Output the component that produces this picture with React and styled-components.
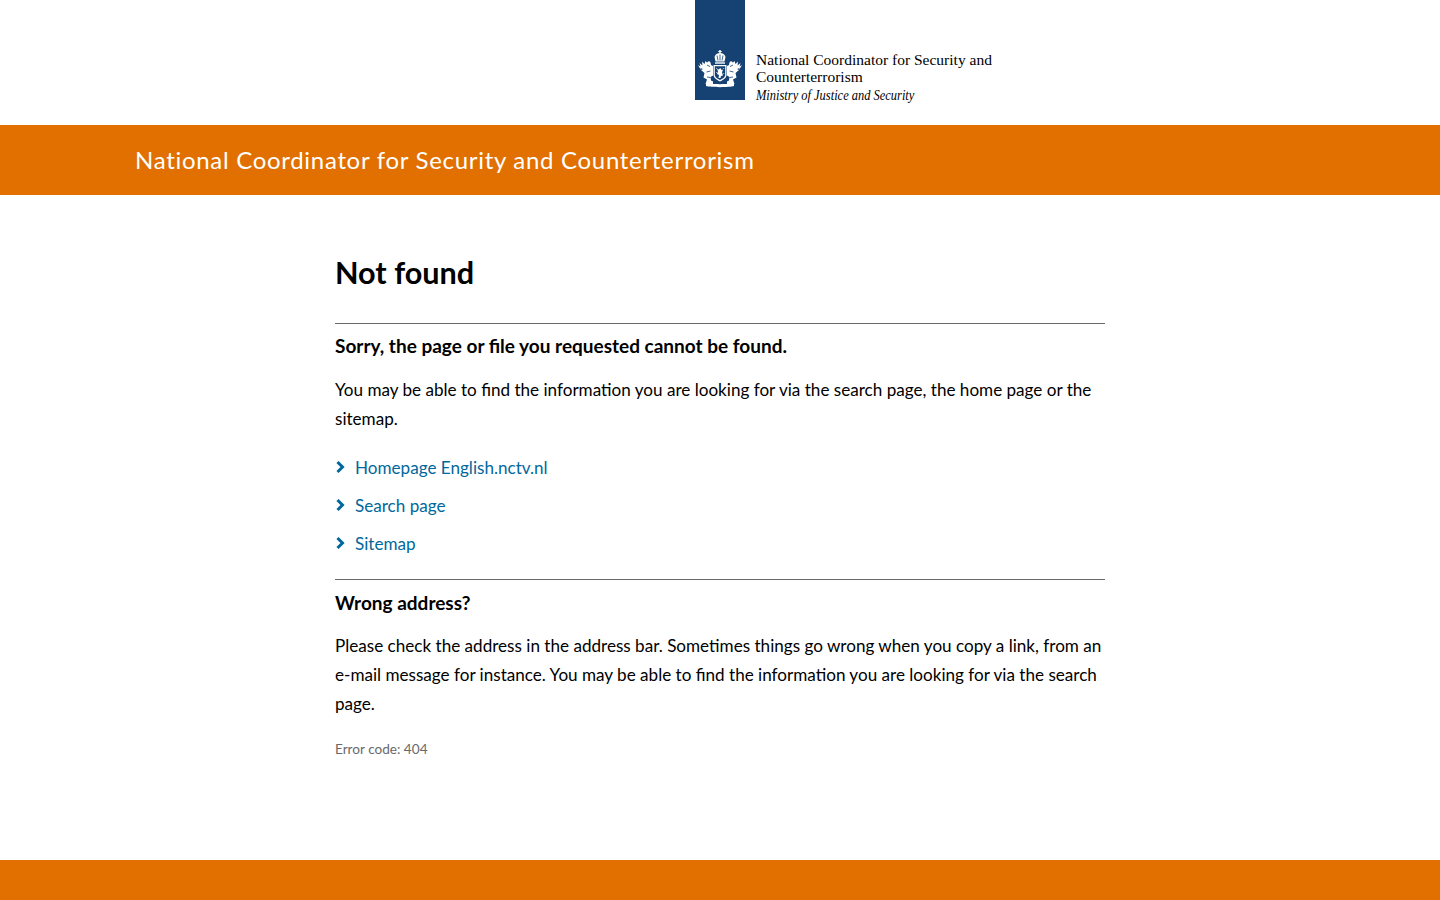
import React from 'react';
import styled, { createGlobalStyle } from 'styled-components';

const GlobalStyle = createGlobalStyle`
html, body {
  margin: 0;
  padding: 0;
  background: #fff;
  color: #000;
  font-family: Lato, "Open Sans", sans-serif;
}
`;

const Page = styled.div`
height: 900px;
display: flex;
flex-direction: column;
overflow: hidden;
`;

const Header = styled.header`
height: 125px;
display: flex;
padding-left: 695px;
`;

const Ribbon = styled.div`
width: 50px;
height: 100px;
background: #154273;
display: flex;
align-items: flex-end;
justify-content: center;
padding-bottom: 12px;
box-sizing: border-box;
`;

const Wordmark = styled.div`
padding: 51px 0 0 11px;
font-family: "Liberation Serif", serif;
font-size: 15.5px;
line-height: 17px;
color: #000;
`;

const Ministry = styled.div`
font-style: italic;
font-size: 15px;
line-height: 21px;
transform: scaleX(0.83);
transform-origin: left center;
white-space: nowrap;
`;

const Band = styled.div`
height: 68px;
padding: 0 0 2px 135px;
background: #e17000;
display: flex;
align-items: center;
color: #fff;
font-size: 24px;
font-weight: 400;
letter-spacing: 0.7px;
`;

const Main = styled.main`
flex: 1;
width: 770px;
margin-left: 335px;
`;

const Title = styled.h1`
margin: 57px 0 29px;
font-size: 30.6px;
line-height: 42px;
font-weight: 700;
`;

const Section = styled.section`
border-top: 1px solid #696969;
padding-top: ${p => p.$top}px;
`;

const Lead = styled.h2`
margin: 0 0 ${p => p.$gap}px;
font-size: 19px;
line-height: 29px;
font-weight: 700;
`;

const Text = styled.p`
margin: 0;
font-size: 17.1px;
line-height: 29px;
`;

const Links = styled.ul`
list-style: none;
margin: 15px 0 17px;
padding: 0;
`;

const LinkItem = styled.li`
height: 38px;
display: flex;
align-items: center;
gap: 10px;
`;

const Chevron = styled.svg`
width: 10px;
height: 14px;
flex: none;
margin-top: -1px;
`;

const Anchor = styled.a`
color: #01689b;
font-size: 17.1px;
text-decoration: none;
`;

const Code = styled.p`
margin: 21px 0 0;
font-size: 13.6px;
line-height: 20px;
color: #696969;
`;

const Footer = styled.footer`
height: 40px;
background: #e17000;
`;

const lion = 'M0 15l2.500 1.500L1.500 13l3 2.500L4 11.500l2.500 2.500 1-3 1.500 1.500 2-1.500 1.500 1.500.5 2.500 2 1v9.500l-2.500 1.500.5 3.500 2 1v2.500H7.500l1.500-4.500-3.500-2 1-4.500-3.500-3L5 19l-2.500-1L3 20z';

const CoatOfArms = () => (
  <svg width="44" height="38" viewBox="0 0 44 38" fill="#fff">
    {/* crown */}
    <rect x="21.300" y="0" width="1.400" height="3" />
    <rect x="20.300" y="1" width="3.400" height="1" />
    <path d="M22 3c2.500 0 5 1.500 5.500 4l-1 4.500h-9l-1-4.500C17 4.500 19.500 3 22 3z" />
    <path d="M19 5.500l1 5M22 4.500v6M25 5.500l-1 5" stroke="#154273" strokeWidth=".8" fill="none" />
    <rect x="17" y="12.300" width="10" height="1.400" />
    {/* lions either side */}
    <path d={lion} />
    <path d={lion} transform="matrix(-1 0 0 1 44 0)" />
    <path d="M9 15l3 1.500M8.500 22l4-1M9 27l3.500.5" stroke="#154273" strokeWidth=".8" fill="none" />
    <path d="M35 15l-3 1.500M35.500 22l-4-1M35 27l-3.500.5" stroke="#154273" strokeWidth=".8" fill="none" />
    {/* shield */}
    <path d="M15.500 15h13v10c0 3-3.500 5-6.500 6.500-3-1.500-6.500-3.500-6.500-6.500z" />
    <path d="M16.800 16.300h10.400V25c0 2.300-2.800 3.800-5.200 5-2.400-1.200-5.200-2.700-5.200-5z" fill="#154273" />
    <path d="M19 18.500l1.500 1 2-1.500 1 2 1.500-.5-1 3 1 3-2 .5-.5 2h-2l.5-3-2-1 1-2.500z" />
    <path d="M18 18h.8v.8H18zM25.300 18h.8v.8h-.8zM18 22h.8v.8H18zM25.300 23h.8v.8h-.8z" />
    {/* motto */}
    <path d="M8 33c5 1.500 23 1.500 28 0v3c-5 1.500-23 1.500-28 0z" />
  </svg>
);

const Arrow = () => (
  <Chevron viewBox="0 0 10 14">
    <path d="M2.500 2l5 5-5 5" fill="none" stroke="#01689b" strokeWidth="3" />
  </Chevron>
);

const links = ['Homepage English.nctv.nl', 'Search page', 'Sitemap'];

export default function App() {
  return (
    <Page>
      <GlobalStyle />
      <Header>
        <Ribbon>
          <CoatOfArms />
        </Ribbon>
        <Wordmark>
          <div>National Coordinator for Security and</div>
          <div>Counterterrorism</div>
          <Ministry>Ministry of Justice and Security</Ministry>
        </Wordmark>
      </Header>
      <Band>National Coordinator for Security and Counterterrorism</Band>
      <Main>
        <Title>Not found</Title>
        <Section $top={7}>
          <Lead $gap={15}>Sorry, the page or file you requested cannot be found.</Lead>
          <Text>You may be able to find the information you are looking for via the search page, the home page or the sitemap.</Text>
          <Links>
            {links.map(l => (
              <LinkItem key={l}>
                <Arrow />
                <Anchor href="#">{l}</Anchor>
              </LinkItem>
            ))}
          </Links>
        </Section>
        <Section $top={8}>
          <Lead $gap={14}>Wrong address?</Lead>
          <Text>Please check the address in the address bar. Sometimes things go wrong when you copy a link, from an e-mail message for instance. You may be able to find the information you are looking for via the search page.</Text>
          <Code>Error code: 404</Code>
        </Section>
      </Main>
      <Footer />
    </Page>
  );
}
